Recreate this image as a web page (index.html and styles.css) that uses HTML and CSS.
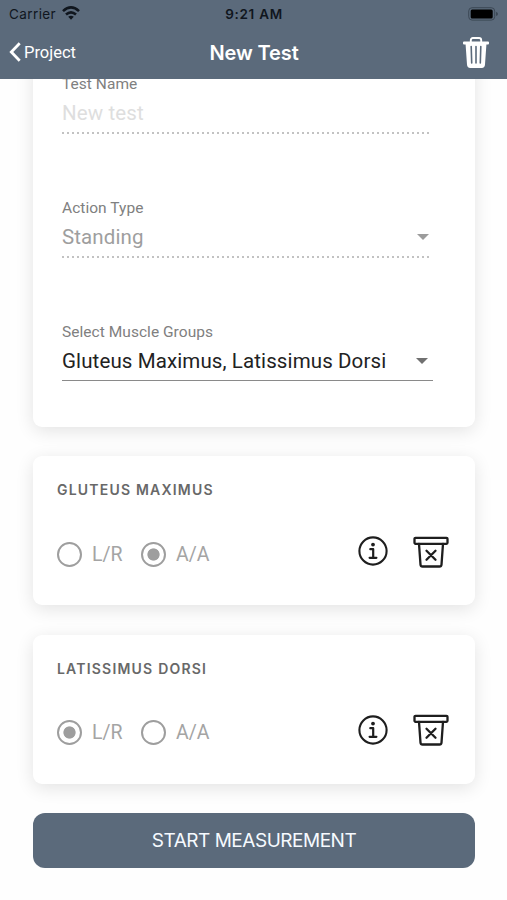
FILE: index.html
```html
<!DOCTYPE html>
<html lang="en">
<head>
<meta charset="utf-8">
<title>New Test</title>
<link rel="stylesheet" href="styles.css">
</head>
<body>
<svg class="defs" width="0" height="0" aria-hidden="true">
  <symbol id="info" viewBox="0 0 30 30">
    <circle cx="15" cy="15" r="13.6" fill="none" stroke="currentColor" stroke-width="2.1"/>
    <circle cx="15" cy="8.6" r="1.9" fill="currentColor"/>
    <path d="M12.3 13.2h2.9v8.2M11.6 21.8h6.8" fill="none" stroke="currentColor" stroke-width="2.2" stroke-linecap="round" stroke-linejoin="round"/>
  </symbol>
  <symbol id="bin" viewBox="0 0 36 32">
    <g fill="none" stroke="currentColor" stroke-width="2.3" stroke-linecap="round" stroke-linejoin="round">
      <rect x="1.5" y="1.8" width="33" height="6" rx="1"/>
      <path d="M6 7.800l1.500 20.800q.2 1.900 2 1.900h17q1.800 0 2-1.900l1.500-20.800M13.500 14.700l9 9M22.500 14.700l-9 9"/>
    </g>
  </symbol>
</svg>
<header class="header">
  <div class="status">
    <div class="carrier"><span>Carrier</span>
      <svg width="18" height="14" viewBox="0 0 18 14" fill="none" stroke="currentColor" stroke-width="2.6"><path d="M1 5.100Q9-2.300 17 5.100M4 8.500Q9 4.100 14 8.500"/><path d="M6.200 10.800Q9 8.500 11.800 10.800L9 13.800z" fill="currentColor" stroke="none"/></svg>
    </div>
    <span class="time">9:21 AM</span>
    <svg class="battery" width="31" height="14" viewBox="0 0 31 14"><rect x=".7" y=".7" width="26" height="12.400" rx="3.400" fill="none" stroke="#3c4855"/><rect x="2.700" y="2.600" width="22" height="8.800" rx="1.500" fill="#000"/><path d="M28 4.700q2 .7 2 2.200t-2 2.200z" fill="#3c4855"/></svg>
  </div>
  <nav class="nav">
    <div class="back">
      <svg width="13" height="20" viewBox="0 0 13 20"><path d="M10.700 1.300L2.300 10l8.400 8.700" fill="none" stroke="currentColor" stroke-width="2.800"/></svg>
      <span class="back-text">Project</span>
    </div>
    <h1 class="title">New Test</h1>
    <svg class="trash" width="26" height="32" viewBox="0 0 26 32"><path d="M7.800 5V3.200q0-2.200 2.200-2.200h6q2.200 0 2.200 2.200V5" fill="none" stroke="currentColor" stroke-width="1.900"/><path d="M1 4.500h24q1 0 1 1v1q0 1-1 1h-1.600L22 27.600q-.2 3.400-3.200 3.400H7.200Q4.200 31 4 27.600L2.600 7.500H1q-1 0-1-1v-1q0-1 1-1z" fill="currentColor"/><path d="M8.200 9.500l.5 16.500M13 9.500V26M17.800 9.500l-.5 16.500" stroke="#5b6a7b" stroke-width="1.600" stroke-linecap="round"/></svg>
  </nav>
</header>
<main class="content">
  <section class="card form">
    <div class="field disabled empty">
      <div class="label">Test Name</div>
      <div class="value"><span>New test</span></div>
    </div>
    <div class="field disabled">
      <div class="label">Action Type</div>
      <div class="value"><span>Standing</span><i class="arrow"></i></div>
    </div>
    <div class="field">
      <div class="label">Select Muscle Groups</div>
      <div class="value"><span>Gluteus Maximus, Latissimus Dorsi</span><i class="arrow"></i></div>
    </div>
  </section>
  <section class="card muscle">
    <h2 class="muscle-name">GLUTEUS MAXIMUS</h2>
    <div class="row">
      <div class="option"><i class="radio"></i><span>L/R</span></div>
      <div class="option"><i class="radio on"></i><span>A/A</span></div>
      <svg class="info"><use href="#info"/></svg>
      <svg class="bin"><use href="#bin"/></svg>
    </div>
  </section>
  <section class="card muscle">
    <h2 class="muscle-name">LATISSIMUS DORSI</h2>
    <div class="row">
      <div class="option"><i class="radio on"></i><span>L/R</span></div>
      <div class="option"><i class="radio"></i><span>A/A</span></div>
      <svg class="info"><use href="#info"/></svg>
      <svg class="bin"><use href="#bin"/></svg>
    </div>
  </section>
  <button class="start"><span>START MEASUREMENT</span></button>
</main>
</body>
</html>
```
FILE: styles.css
```css
* { box-sizing: border-box; }
body { margin: 0; height: 900px; overflow: hidden; background: #fefefe; font-family: Roboto, sans-serif; }
.defs { display: block; }
.header { height: 79px; background: #5b6a7b; font-family: Inter, sans-serif; }
.status { height: 27px; padding: 0 8px 0 9px; display: grid; grid-template-columns: 1fr auto 1fr; align-items: center; color: #10161e; font-size: 13.5px; }
.carrier { display: flex; align-items: center; gap: 6px; letter-spacing: 0.4px; }
.carrier svg { margin-top: -1px; }
.time { font-weight: 600; font-size: 13.5px; letter-spacing: 0.7px; }
.battery { justify-self: end; }
.nav { height: 52px; padding: 0 18px 0 9px; display: grid; grid-template-columns: 1fr auto 1fr; align-items: center; color: #fff; }
.back { display: flex; align-items: center; gap: 2px; font-family: Roboto, sans-serif; font-size: 16.5px; margin-top: -2px; }
.title { margin: -1px 0 0 10px; font-size: 20px; font-weight: 600; line-height: 26px; letter-spacing: -0.1px; }
.trash { justify-self: end; }
.content { height: 821px; padding: 0 32px 0 33px; overflow: hidden; }
.card { background: #fff; border-radius: 9px; box-shadow: 0 4px 18px rgba(0, 0, 0, 0.11); }
.form { margin-top: -20px; height: 368px; padding: 15px 42px 0 29px; }
.field { margin-bottom: 64px; }
.label { height: 20px; line-height: 20px; font-size: 15.5px; color: #808080; letter-spacing: 0.04px; }
.value { height: 38px; display: flex; align-items: center; justify-content: space-between; padding-right: 5px; font-size: 20.5px; letter-spacing: 0.11px; color: #222; white-space: nowrap; }
.field:not(.disabled) .value { border-bottom: 1px solid #8a8a8a; height: 39px; }
.disabled::after { content: ""; display: block; width: 369px; height: 2px; background: repeating-linear-gradient(90deg, #c2c2c2 0 2px, transparent 2px 5px); }
.disabled .value { color: #9e9e9e; padding-right: 4px; }
.empty .value { color: #dedede; height: 37px; margin-bottom: 1px; }
.arrow { width: 12px; height: 6px; background: #707070; clip-path: polygon(0 0, 100% 0, 50% 100%); }
.disabled .arrow { background: #9c9c9c; }
.muscle { margin-top: 29px; height: 149px; padding: 24px 26px 0 24px; }
.muscle + .muscle { margin-top: 29.5px; }
.muscle-name { margin: 0; height: 20px; line-height: 20px; font-family: Inter, sans-serif; font-size: 14px; font-weight: 600; letter-spacing: 1.2px; color: #686868; }
.row { height: 36px; margin-top: 35px; display: flex; align-items: center; color: #1e1e1e; }
.option { display: flex; align-items: center; gap: 10px; width: 84px; padding-top: 2px; font-size: 19.5px; color: #a4a4a4; font-weight: 400; }
.radio { display: block; flex: none; width: 25px; height: 25px; border: 2.5px solid #9e9e9e; border-radius: 50%; }
.on { background: radial-gradient(circle, #9e9e9e 5.7px, transparent 6.5px); }
.info { width: 30px; height: 30px; margin-left: auto; margin-top: -4px; }
.bin { width: 36px; height: 32px; margin-left: 25px; margin-top: -3px; }
.start { display: flex; align-items: center; justify-content: center; width: 442px; height: 55px; margin-top: 29px; padding: 0; border: 0; border-radius: 12px; background: #5b6a7b; color: #f6faff; font-family: Inter, sans-serif; font-size: 19px; letter-spacing: -0.48px; }
```
